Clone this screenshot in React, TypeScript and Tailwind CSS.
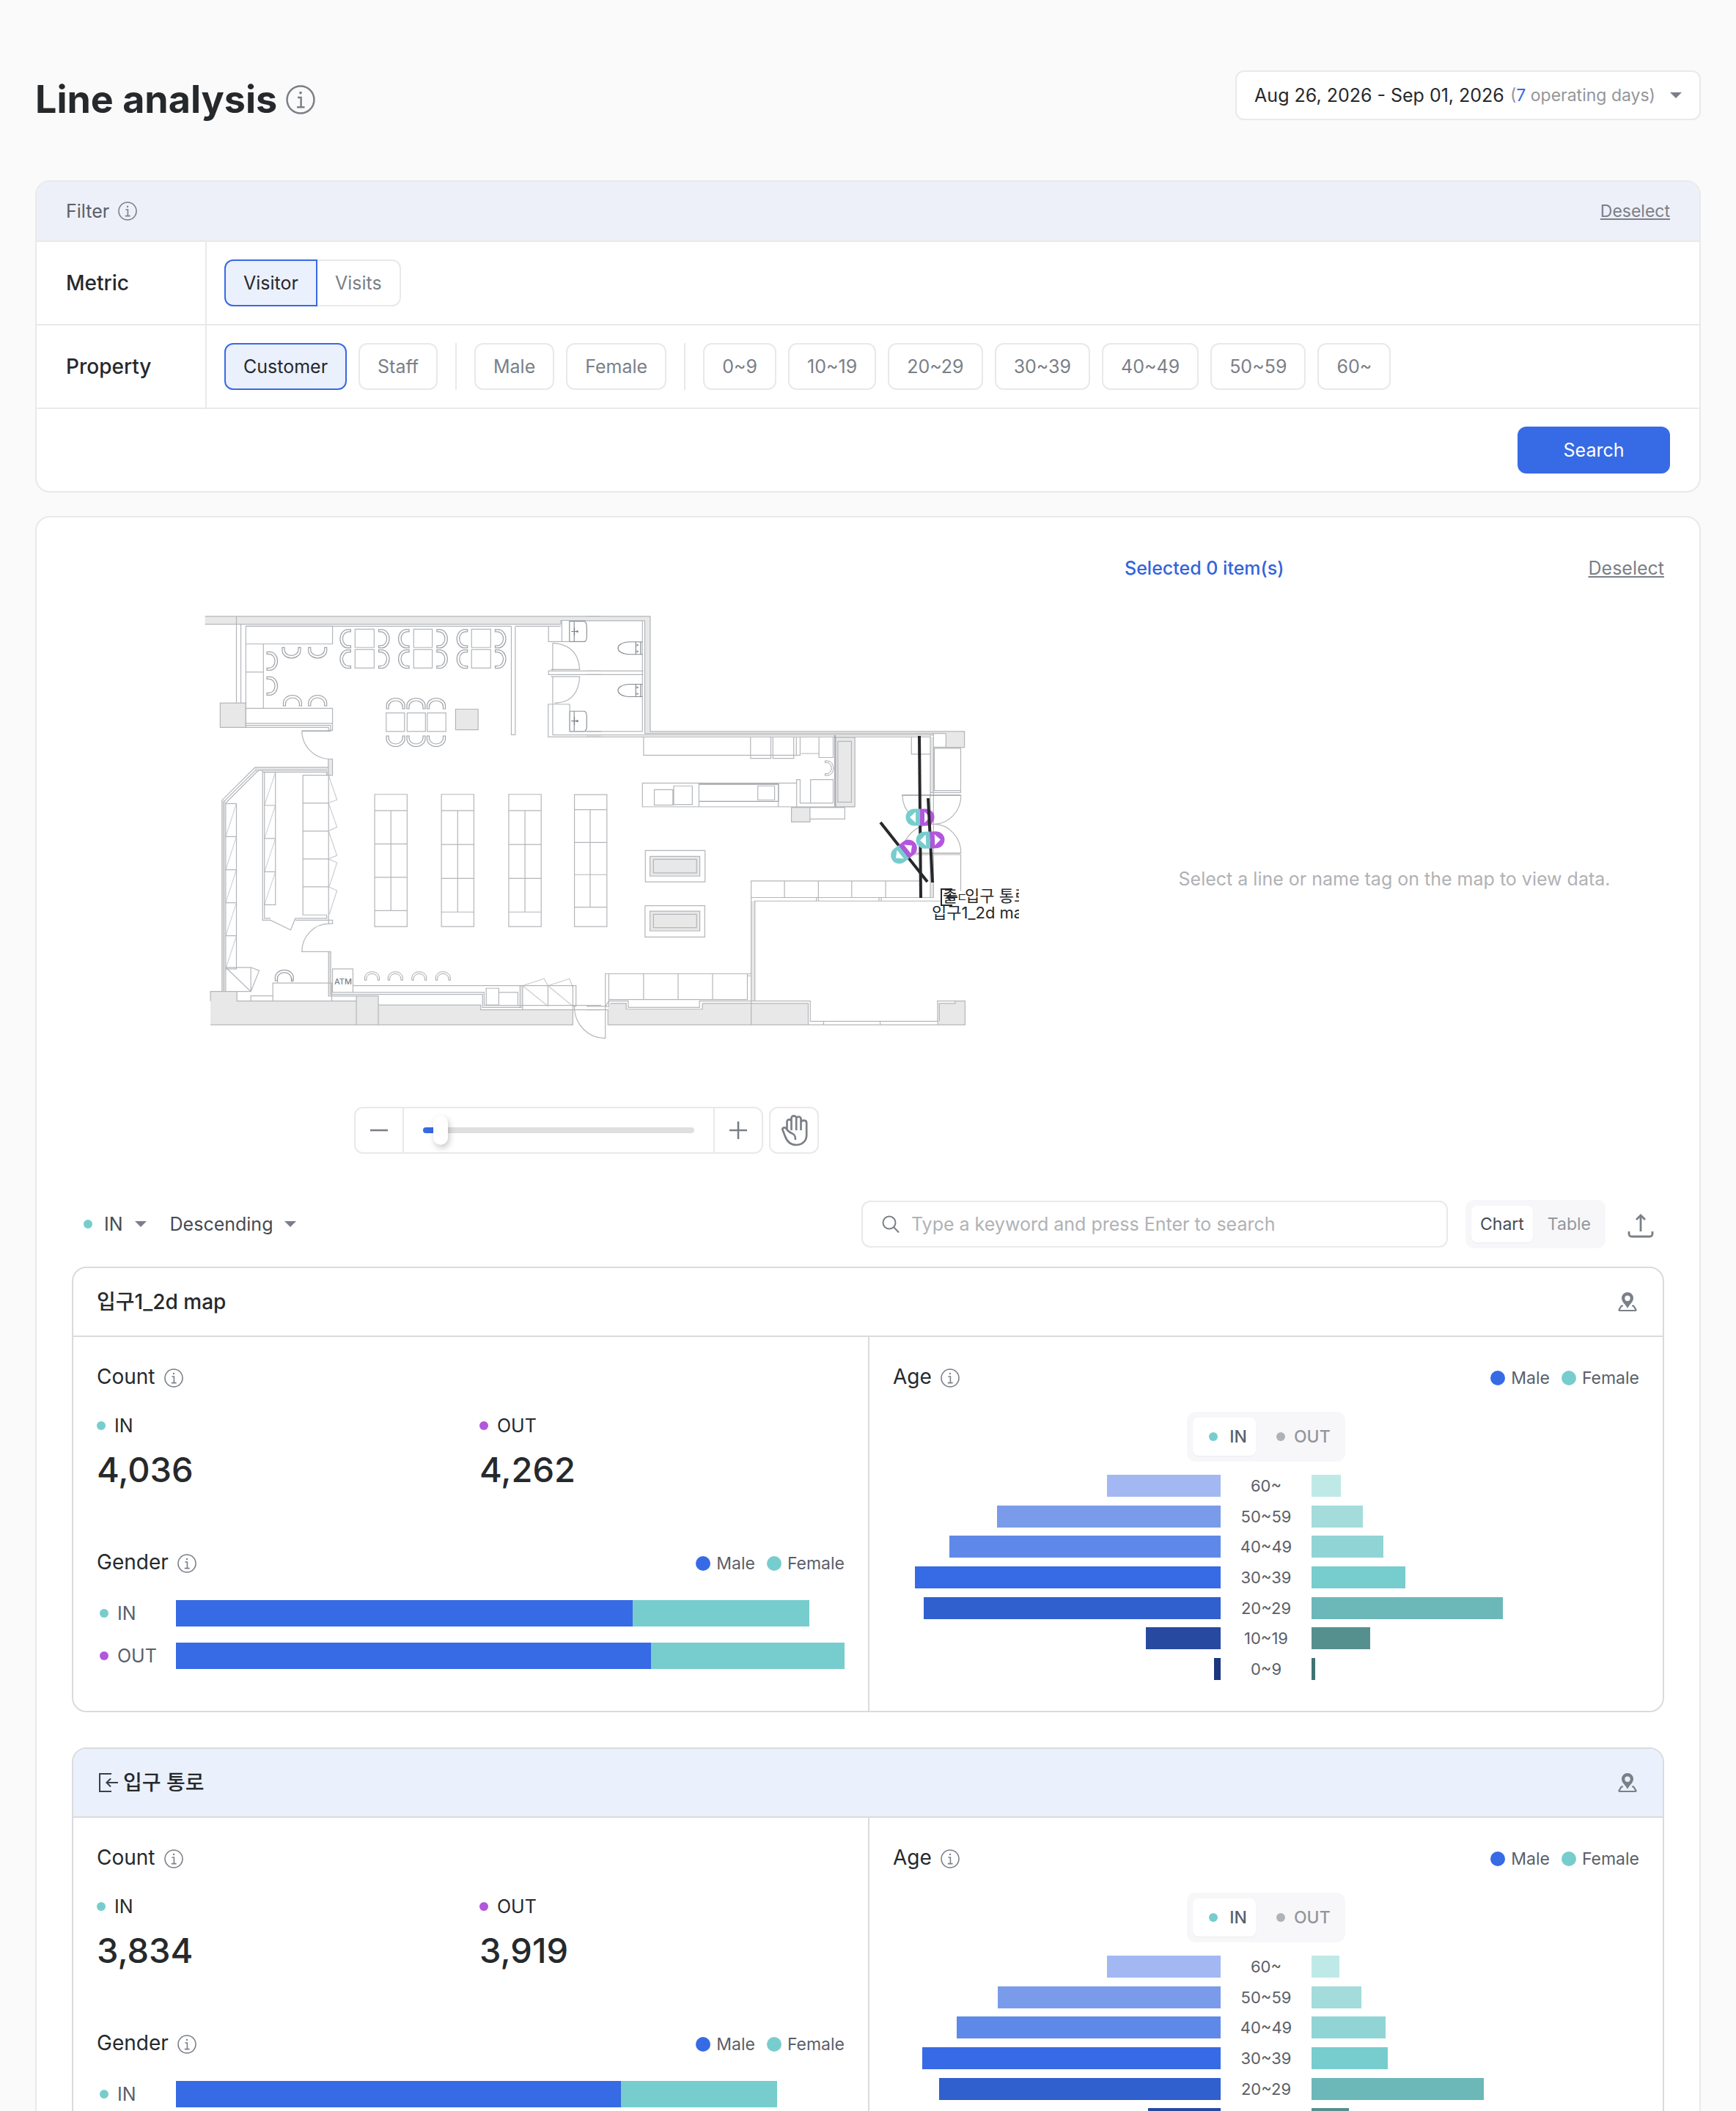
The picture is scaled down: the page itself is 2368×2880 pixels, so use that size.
import React, { useState } from "react";

type LineItem = {
  name: string;
  entrance?: boolean;
  count: { in: string; out: string };
  gender: { in: [number, number]; out: [number, number] };
  ages: { label: string; male: number; female: number }[];
};

/* Bar lengths are percentages of the space available to each chart. */
const ITEMS: LineItem[] = [
  {
    name: "입구1_2d map",
    count: { in: "4,036", out: "4,262" },
    gender: { in: [68.3, 26.4], out: [71.1, 28.9] },
    ages: [
      { label: "60~", male: 34.6, female: 9 },
      { label: "50~59", male: 68.2, female: 15.6 },
      { label: "40~49", male: 82.7, female: 22 },
      { label: "30~39", male: 93.3, female: 28.7 },
      { label: "20~29", male: 90.6, female: 58.3 },
      { label: "10~19", male: 22.9, female: 18 },
      { label: "0~9", male: 2.1, female: 1.1 },
    ],
  },
  {
    name: "입구 통로",
    entrance: true,
    count: { in: "3,834", out: "3,919" },
    gender: { in: [66.6, 23.3], out: [67.4, 24.6] },
    ages: [
      { label: "60~", male: 34.6, female: 8.5 },
      { label: "50~59", male: 68.1, female: 15.2 },
      { label: "40~49", male: 80.5, female: 22.5 },
      { label: "30~39", male: 91, female: 23.2 },
      { label: "20~29", male: 85.8, female: 52.6 },
      { label: "10~19", male: 22.1, female: 11.4 },
      { label: "0~9", male: 2, female: 1 },
    ],
  },
];

const MALE_SHADES = ["bg-[#a3b7f2]", "bg-[#7a9be9]", "bg-[#5f89e8]", "bg-[#376ae5]", "bg-[#305fce]", "bg-[#27499f]", "bg-[#1b367f]"];
const FEMALE_SHADES = ["bg-[#bfe9e7]", "bg-[#a3dcdb]", "bg-[#90d4d5]", "bg-[#77cdce]", "bg-[#6cb8b9]", "bg-[#55908f]", "bg-[#3f7473]"];

function InfoIcon({ className }: { className: string }) {
  return (
    <svg viewBox="0 0 26 26" className={className} fill="none" stroke="currentColor" strokeWidth="1.6" aria-hidden="true">
      <circle cx="13" cy="13" r="12" />
      <path d="M10.4 11H13.4V19.4M9.8 19.6H16.6" />
      <circle cx="13" cy="6.9" r="1.2" fill="currentColor" stroke="none" />
    </svg>
  );
}

function Caret() {
  return (
    <svg viewBox="0 0 16 8" className="pointer-events-none h-2 w-4 shrink-0 text-[#7b7f87]" fill="currentColor" aria-hidden="true">
      <path d="M0 0H16L8 8z" />
    </svg>
  );
}

function HandIcon() {
  return (
    <svg viewBox="104 56 116 138" className="h-[46px] w-[39px] text-[#7b7f87]" fill="none" stroke="currentColor" strokeWidth="8" strokeLinecap="butt" aria-hidden="true">
      <path d="M132 126V90a9 9 0 0 1 18 0V125M150 92V76a10 10 0 0 1 20 0V125M170 78a9.5 9.5 0 0 1 19 2V125M189 94c0-12 23-12 23 0V146c0 24-20 39-42 39-23 0-38-14-46-36l-10-26c-3-9 10-12 15-5 6 10 12 15 22 19 13 5 16 12 15 27" />
    </svg>
  );
}

function PinIcon() {
  return (
    <svg viewBox="0 0 28 28" className="h-7 w-7 text-[#7b8088]" fill="none" stroke="currentColor" strokeWidth="2.2" strokeLinejoin="round" aria-hidden="true">
      <path fillRule="evenodd" stroke="none" fill="currentColor" d="M14 1a8 8 0 0 0-8 8c0 5.500 5.500 8.500 8 14 2.500-5.500 8-8.500 8-14a8 8 0 0 0-8-8zm0 4.500a3.700 3.700 0 1 1 0 7.400 3.700 3.700 0 0 1 0-7.400z" />
      <path d="M8 19.500H5.800L2.600 24.600c-.5.900 0 1.400.9 1.400H24.500c.9 0 1.400-.5.900-1.400L22.200 19.500H20" />
    </svg>
  );
}

function EnterIcon() {
  return (
    <svg viewBox="0 0 32 32" className="h-8 w-8 text-[#3b4048]" fill="none" stroke="currentColor" strokeWidth="2" aria-hidden="true">
      <path d="M20 4H4V28H20M29 16H13M19 10.500L13.400 16L19 21.500" />
    </svg>
  );
}

function Chair({ x, y, r = 0, s = 1 }: { x: number; y: number; r?: number; s?: number }) {
  return (
    <path
      d="M-12.500 7V3A12.500 10.500 0 0 1 12.500 3V7H9.500V4A9.500 8 0 0 0 -9.500 4V7z"
      transform={`translate(${x} ${y}) rotate(${r}) scale(${s})`}
    />
  );
}

function chairAt(x: number, y: number, r = 0, s = 1) {
  return <Chair key={`${x}-${y}`} x={260 + x / 2.8} y={820 + y / 2.529} r={r} s={s} />;
}

/* The west wing is drawn on its own survey grid, 2.8 × 2.529 units per pixel. */
function WestWing() {
  const v = "non-scaling-stroke";
  return (
    <g transform="translate(260 820) scale(.35714 .39541)">
      <g fill="#e8e8e8">
        <path vectorEffect={v} d="M55 53H1568V68H1414V80H55z" stroke="none" />
        <path vectorEffect={v} d="M113 352H211V436H113zM1012 373H1098V444H1012z" />
        <path vectorEffect={v} d="M76 1380V1347H177V1380H633V1363H717V1394H1108V1410H1460V1462H76z" stroke="none" />
        <path vectorEffect={v} stroke="none" d="M526 545H542V601H520V588H246V574H526zM1258 1327H1268V1402H1258zM120 687H133V1347H120zM527 1210H535V1360H527z" />
      </g>
      <g>
        <path vectorEffect={v} d="M55 53H1568M55 80H1414V67H1568M175 53V352M192 80V352M211 436V87H542V148H211M278 148V370M211 245H278M211 370H542V446H527V436H211M211 422H542M211 429H535V446" />
        <path vectorEffect={v} d="M1225 87V461H1240V87M1225 87H211M1367 87V140H1418V68M1240 87H1414" />
        <path vectorEffect={v} d="M628 97H701V160H628zM628 167H701V231H628zM852 97H923V160H852zM852 167H923V231H852zM1073 97H1146V160H1073zM1073 167H1146V231H1073zM747 386H817V450H747zM827 386H897V450H827zM904 386H975V450H904z" />
        <path vectorEffect={v} stroke="#8f9399" d="M1447 70H1505Q1512 72 1513 90V122Q1513 137 1505 140H1447zM1465 72V140M1448 380H1503Q1513 382 1513 398V432Q1513 448 1503 450H1448zM1465 381V450" />
        <path vectorEffect={v} d="M1418 140H1447M1383 145Q1480 150 1486 236H1376M1383 145V241M1568 241H1367V254H1568M1376 236H1486M1376 261H1486Q1480 350 1390 352M1383 261V352" />
        <path vectorEffect={v} d="M1568 469H1366V356H1448V450H1568M1383 352V462H1568" />
        <path vectorEffect={v} d="M535 449H425A110 97 0 0 0 526 545M425 447H542M526 545H542V601H520V588M246 574H526V601M526 545V590" />
        <path vectorEffect={v} d="M246 574L120 687V1347M252 580L127 692V1347M260 583L134 697V1347M258 583H520M275 585V1101H305L382 1135L400 1095H520V1083M282 590V1095H305M275 590H520" />
        <path vectorEffect={v} d="M134 699H175V1269H134M134 813H175M134 927H175M134 1041H175M134 1155H175M282 591H324V1048H282M282 705H324M282 819H324M282 934H324" />
        <path vectorEffect={v} strokeOpacity=".6" d="M134 813L175 699M134 927L175 813M134 1041L175 927M134 1155L175 1041M134 1269L175 1155M282 705L324 591M282 819L324 705M282 934L324 819M282 1048L324 934" />
        <path vectorEffect={v} d="M527 601H429V1083H520M527 601V1113H542V1101H400M429 697H527M429 794H527M429 890H527M429 986H527" />
        <path vectorEffect={v} strokeOpacity=".7" d="M527 601L559 686L530 695M527 697L559 780L530 792M527 794L559 878L530 888M530 984L559 903L527 890M530 1080L559 999L527 986" />
        <path vectorEffect={v} d="M530 1113A105 97 0 0 0 425 1210H535V1357H1115V1402H1265M527 1210V1363H717V1462M633 1363V1462M717 1394H1108V1410H1568" />
        <path vectorEffect={v} d="M76 1380V1347H177V1380H633M76 1462H1460V1400M134 1264H230V1347H134M134 1264L230 1347L262 1275L230 1264M314 1380V1318H539V1380M314 1362H230V1380M332 1300V1316M387 1300V1316" />
        <path vectorEffect={v} d="M542 1269H620V1350H542zM620 1327H1472V1398H1460V1327M542 1350H1121V1395H1568M1129 1336H1177V1394H1129zM1177 1350H1250V1394M1258 1327V1402M1268 1327V1410M1365 1327V1398" />
        <path vectorEffect={v} strokeOpacity=".7" d="M1268 1327L1365 1398M1365 1327L1460 1398M1268 1327L1350 1303L1365 1327L1447 1303L1460 1333" />
        <path vectorEffect={v} d="M703 667H827V1123H703zM703 723H827M703 838H827M703 953H827M703 1068H827M765 723V1068" />
        <path vectorEffect={v} d="M958 667H1082V1123H958zM958 723H1082M958 840H1082M958 957H1082M958 1073H1082M1020 723V1073" />
        <path vectorEffect={v} d="M1215 667H1339V1123H1215zM1215 723H1339M1215 840H1339M1215 957H1339M1215 1073H1339M1277 723V1073" />
        <path vectorEffect={v} d="M1466 668H1590V1123H1466zM1466 720H1590M1466 833H1590M1466 944H1590M1466 1056H1590M1526 720V1056" />
      </g>
      <g stroke="#7d8288" fill="#7d8288">
        <path vectorEffect={v} fill="none" d="M1454 105H1480M1454 414H1480M1466 92V118M1466 400V428" />
        <circle cx="1477" cy="105" r="4" stroke="none" />
        <circle cx="1477" cy="414" r="4" stroke="none" />
      </g>
    </g>
  );
}

function EastWing() {
  const v = "non-scaling-stroke";
  return (
    <g transform="translate(800 820) scale(.39541)">
      <g fill="#e8e8e8" stroke="none">
        <path d="M0 53H220V450H1240V457H201V68H0z" />
        <path d="M860 470H926V710H860zM707 712H771V762H707zM1240 450H1304V505H1240z" />
        <path d="M219 881H391V949H219zM219 1070H391V1138H219z" />
        <path d="M74 1462V1398L82 1388H137V1408H400V1388H766V1462zM1214 1462V1388H1272V1380H1306V1462z" />
        <path d="M568 1035H581V1380H568zM1186 470H1198V661H1186zM1186 875H1198V1023H1186z" />
      </g>
      <path vectorEffect={v} d="M0 53H220V450H1304V505H1240M0 68H201V457H1240M193 70V450M0 450H193M0 462H1197M0 469H1186M0 241H196M0 254H196" />
      <path vectorEffect={v} stroke="#85898f" d="M193 141H150C95 142 95 183 150 184H193M170 141V184M187 141V184M193 287H150C95 288 95 329 150 330H193M170 287V330M187 287V330" />
      <path d="M173 148l8 4-8 4zM173 170l8 4-8 4zM173 294l8 4-8 4zM173 316l8 4-8 4z" fill="#85898f" stroke="none" />
      <path vectorEffect={v} d="M197 470V532H737V470M566 470V543H636V470M643 470V543H715V470M724 470V532M740 526H802M802 470V540H851V470M860 470H926V710H860zM867 484H914V694H867z" />
      <path vectorEffect={v} stroke="#85898f" d="M857 463V710M388 691H662V630M388 632H662" />
      <path vectorEffect={v} d="M725 628H193V710H926M234 651H298V704H234zM301 638H365V702H301zM388 628V710M662 628V710M591 638H649V686H591zM725 710V616H737V697H851M773 697V616H851V697M707 712H771V762H707zM771 712H891V752H771z" />
      <path vectorEffect={v} d="M203 861H409V969H203zM219 881H391V949H219zM231 891H380V938H231zM202 1051H408V1159H202zM219 1070H391V1138H219zM231 1081H380V1127H231z" />
      <path vectorEffect={v} d="M1150 966H568V1023H1198M683 966V1023M800 966V1023M915 966V1023M1032 966V1023M568 1023V1462M581 1380V1035H1225M793 1023V1035M800 1023V1035M1009 1023V1035M1017 1023V1035" />
      <path vectorEffect={v} d="M1121 470V528H1186M1186 464V1023M1197 457V1023M1240 457V504H1198M1200 508H1291V654H1200zM1186 661H1291V654M1200 875H1291V1000M1130 875H1291" />
      <path vectorEffect={v} stroke="#85898f" d="M1088 670H1292M1120 870H1292" />
      <path vectorEffect={v} d="M1090 670A106 100 0 0 0 1198 770A94 100 0 0 0 1292 670M1292 870A94 100 0 0 0 1198 770A106 100 0 0 0 1090 870" />
      <path vectorEffect={v} d="M65 1510V1286H568M77 1398V1286M197 1286V1375M316 1286V1375M435 1286V1375M555 1286V1375H77M555 1293H568M0 1398H77M0 1410H74V1462H1306V1380H1211V1450H772V1380H390V1402H144V1380H77L66 1398M82 1388H137V1408H400V1388H765V1462M818 1450V1462M1013 1450V1462M1212 1462V1450M1217 1450V1388H1272V1380" />
      <path vectorEffect={v} d="M-42 1400A105 108 0 0 0 66 1508" />
    </g>
  );
}

function Marker({ x, y, r }: { x: number; y: number; r: number }) {
  return (
    <g transform={`translate(${x} ${y}) rotate(${r})`} stroke="none">
      <path d="M0 -11.500H-8A11.500 11.500 0 0 0 -8 11.500H0z" fill="#77cdce" />
      <path d="M0 -11.500H8A11.500 11.500 0 0 1 8 11.500H0z" fill="#b257dc" />
      <path d="M-14 0L-6 -7.500V7.500zM14 0L6 -7.500V7.500z" fill="#fff" />
    </g>
  );
}

function FloorPlan() {
  return (
    <svg viewBox="210 754 1180 756" className="block h-auto w-full max-w-[1180px] overflow-hidden" role="img" aria-label="Store floor plan">
      <g fill="none" stroke="#b3b6ba" strokeWidth="1.2">
        <WestWing />
        <EastWing />
        <g stroke="#9fa3a8">
          {[385, 485].map((x) => chairAt(x, 178, 180))}
          {[389, 485].map((x) => chairAt(x, 344))}
          {[207, 293].map((y) => chairAt(311, y, 90))}
          {[592, 815, 1038].flatMap((x) => [130, 200].map((y) => chairAt(x, y, -90)))}
          {[738, 960, 1183].flatMap((x) => [130, 200].map((y) => chairAt(x, y, 90)))}
          {[783, 861, 938].map((x) => chairAt(x, 354))}
          {[783, 861, 938].map((x) => chairAt(x, 483, 180))}
          {[693, 782, 873, 964].map((x) => chairAt(x, 1294, 0, 0.8))}
          {chairAt(358, 1292)}
          <Chair x={1131} y={1048} r={90} s={0.8} />
        </g>
      </g>
      <text x="456" y="1343" fontSize="11" fontWeight="500" fill="#7d8186" className="font-['Inter',sans-serif]">
        ATM
      </text>
      <g stroke="#26282b" strokeWidth="4" fill="none">
        <path d="M1254 1004L1256 1225" />
        <Marker x={1255} y={1115} r={0} />
        <path d="M1266 1089L1272 1204" />
        <path d="M1201 1122L1265 1203" />
        <Marker x={1269} y={1146} r={-2} />
        <Marker x={1233} y={1162} r={-38} />
      </g>
      <path d="M1299 1213H1284V1235H1299M1292 1224H1306M1297 1219L1292 1224L1297 1229" fill="none" stroke="#26282b" strokeWidth="2" />
      <g fontSize="22" fill="#26282b" className="font-['Inter','Noto_Sans_CJK_KR',sans-serif]">
        <text x="1286" y="1230">출</text>
        <text x="1305" y="1230" fontSize="16">ㄷ</text>
        <text x="1316" y="1230">입구 통로</text>
        <text x="1271" y="1253">입구1_2d ma</text>
      </g>
    </svg>
  );
}

function Chip({ label, on = false }: { label: string; on?: boolean }) {
  return (
    <button
      type="button"
      aria-pressed={on}
      className={
        on
          ? "h-16 rounded-xl border-2 border-[#376ae5] bg-[#ebf0fd] px-6 text-[25px] leading-8 text-[#26292c]"
          : "h-16 rounded-xl border-2 border-[#e8e9eb] bg-white px-6 text-[25px] leading-8 text-[#7b7f87]"
      }
    >
      {label}
    </button>
  );
}

function Dot({ tone }: { tone: "in" | "out" | "off" }) {
  const color = tone === "in" ? "bg-[#77cdce]" : tone === "out" ? "bg-[#b257dc]" : "bg-[#b0b2b5]";
  return <span className={`h-3 w-3 shrink-0 rounded-full ${color}`} />;
}

function Legend() {
  return (
    <div className="flex items-center gap-4 pt-1 text-[23px] leading-8 text-[#5a5f69]">
      <span className="flex items-center gap-2">
        <span className="h-5 w-5 rounded-full bg-[#376ae5]" />
        Male
      </span>
      <span className="flex items-center gap-2">
        <span className="h-5 w-5 rounded-full bg-[#77cdce]" />
        Female
      </span>
    </div>
  );
}

function SectionTitle({ children }: { children: React.ReactNode }) {
  return (
    <h3 className="flex items-center gap-3 text-[28px] leading-10 text-[#26292c]">
      {children}
      <InfoIcon className="mt-1 h-[26px] w-[26px] text-[#7b7f87]" />
    </h3>
  );
}

function CountCell({ tone, label, value }: { tone: "in" | "out"; label: string; value: string }) {
  return (
    <div>
      <div className="flex items-center gap-3 text-[25px] leading-9 text-[#26292c]">
        <Dot tone={tone} />
        {label}
      </div>
      <div className="mt-3 text-[47px] leading-[60px] font-medium text-[#26292c]">{value}</div>
    </div>
  );
}

function GenderRow({ tone, label, parts }: { tone: "in" | "out"; label: string; parts: [number, number] }) {
  return (
    <div className="flex h-9 items-center">
      <div className="flex w-[108px] shrink-0 items-center gap-3 pl-1 text-[25px] leading-9 text-[#5a5f69]">
        <Dot tone={tone} />
        {label}
      </div>
      <div className="flex h-9 flex-1">
        <div className="bg-[#376ae5]" style={{ width: `${parts[0]}%` }} />
        <div className="bg-[#77cdce]" style={{ width: `${parts[1]}%` }} />
      </div>
    </div>
  );
}

function LineCard({ item }: { item: LineItem }) {
  return (
    <article className="overflow-hidden rounded-[20px] border-2 border-[#dadbdd] bg-white">
      <header
        className={
          item.entrance
            ? "flex h-[94px] items-center justify-between border-b-2 border-[#dadbdd] bg-[#ebf0fd] px-8"
            : "flex h-[94px] items-center justify-between border-b-2 border-[#dadbdd] px-8"
        }
      >
        <h2 className="flex items-center gap-1 text-[28px] leading-10 font-medium text-[#26292c]">
          {item.entrance && <EnterIcon />}
          {item.name}
        </h2>
        <button type="button" aria-label="Show on map" className="flex h-8 w-8 items-center justify-center">
          <PinIcon />
        </button>
      </header>
      <div className="grid grid-cols-2">
        <section className="px-8 pt-[34px] pb-14">
          <SectionTitle>Count</SectionTitle>
          <div className="mt-[29px] grid grid-cols-2 gap-6">
            <CountCell tone="in" label="IN" value={item.count.in} />
            <CountCell tone="out" label="OUT" value={item.count.out} />
          </div>
          <div className="mt-[76px] flex items-center justify-between">
            <SectionTitle>Gender</SectionTitle>
            <Legend />
          </div>
          <div className="mt-8 flex flex-col gap-[22px]">
            <GenderRow tone="in" label="IN" parts={item.gender.in} />
            <GenderRow tone="out" label="OUT" parts={item.gender.out} />
          </div>
        </section>
        <section className="border-l-2 border-[#dadbdd] px-8 pt-[34px] pb-[42px]">
          <div className="flex items-center justify-between">
            <SectionTitle>Age</SectionTitle>
            <Legend />
          </div>
          <div className="mt-7 flex justify-center">
            <div className="flex h-[68px] items-center rounded-xl bg-[#f7f7fa] p-2 text-[23px] leading-8 font-medium">
              <button type="button" aria-pressed="true" className="flex h-[52px] items-center gap-4 rounded-lg bg-white pr-3 pl-[22px] text-[#5a5f69] shadow-xs">
                <Dot tone="in" />
                IN
              </button>
              <button type="button" aria-pressed="false" className="flex h-[52px] items-center gap-3 pr-3 pl-7 text-[#94969a]">
                <Dot tone="off" />
                OUT
              </button>
            </div>
          </div>
          <div className="mt-[18px] flex h-[280px] flex-col justify-between">
            {item.ages.map((row, i) => (
              <div key={row.label} className="grid h-[30px] grid-cols-[1fr_124px_1fr] items-center">
                <div className="flex h-[30px] justify-end">
                  <div className={MALE_SHADES[i]} style={{ width: `${row.male}%` }} />
                </div>
                <div className="text-center text-[22px] leading-[30px] text-[#5a5f69]">{row.label}</div>
                <div className="flex h-[30px]">
                  <div className={FEMALE_SHADES[i]} style={{ width: `${row.female}%` }} />
                </div>
              </div>
            ))}
          </div>
        </section>
      </div>
    </article>
  );
}

export default function App() {
  const [zoom, setZoom] = useState(4);
  return (
    <div className="h-screen overflow-y-auto bg-[#fafafa] px-12 pt-24 font-['Inter','Noto_Sans_CJK_KR',sans-serif] text-[#26292c] [scrollbar-width:none]">
      <header className="flex h-[150px] items-start justify-between">
        <h1 className="flex items-center gap-3 text-[52px] leading-[80px] font-bold">
          Line analysis
          <InfoIcon className="h-10 w-10 text-[#7b7f87]" />
        </h1>
        <button type="button" className="flex h-[68px] items-center rounded-xl border-2 border-[#e8e9eb] bg-white pr-6 pl-6 text-[25px] leading-8">
          Aug 26, 2026 - Sep 01, 2026
          <span className="mr-5 ml-2 text-[23px] text-[#94969a]">
            (<span className="text-[#376ae5]">7</span> operating days)
          </span>
          <Caret />
        </button>
      </header>

      <section className="overflow-hidden rounded-[20px] border-2 border-[#e8e9eb] bg-white">
        <div className="flex h-[82px] items-center justify-between border-b-2 border-[#e8e9eb] bg-[#edf0f8] px-10">
          <span className="flex items-center gap-3 text-[25px] leading-8 text-[#5a5f69]">
            Filter
            <InfoIcon className="h-[26px] w-[26px] text-[#7b7f87]" />
          </span>
          <button type="button" className="text-[23px] leading-8 text-[#7b7f87] underline underline-offset-2">
            Deselect
          </button>
        </div>
        <div className="flex h-[114px] border-b-2 border-[#e8e9eb]">
          <div className="flex w-[232px] items-center border-r-2 border-[#e8e9eb] pl-10 text-[28px] font-medium">Metric</div>
          <div className="flex items-center pl-6">
            <button type="button" aria-pressed="true" className="h-16 rounded-l-xl border-2 border-[#376ae5] bg-[#ebf0fd] px-6 text-[25px] leading-8">
              Visitor
            </button>
            <button type="button" aria-pressed="false" className="h-16 rounded-r-xl border-2 border-l-0 border-[#e8e9eb] px-6 text-[25px] leading-8 text-[#7b7f87]">
              Visits
            </button>
          </div>
        </div>
        <div className="flex h-[114px] border-b-2 border-[#e8e9eb]">
          <div className="flex w-[232px] items-center border-r-2 border-[#e8e9eb] pl-10 text-[28px] font-medium">Property</div>
          <div className="flex items-center gap-6 pl-6">
            <div className="flex gap-4">
              <Chip label="Customer" on />
              <Chip label="Staff" />
            </div>
            <span className="h-16 w-[2px] bg-[#e8e9eb]" />
            <div className="flex gap-4">
              <Chip label="Male" />
              <Chip label="Female" />
            </div>
            <span className="h-16 w-[2px] bg-[#e8e9eb]" />
            <div className="flex gap-4">
              {["0~9", "10~19", "20~29", "30~39", "40~49", "50~59", "60~"].map((age) => (
                <Chip key={age} label={age} />
              ))}
            </div>
          </div>
        </div>
        <div className="flex h-[112px] items-center justify-end px-10">
          <button type="button" className="h-16 w-52 rounded-xl bg-[#376ae5] text-[25px] leading-8 text-white">
            Search
          </button>
        </div>
      </section>

      <main className="mt-8 rounded-[20px] border-2 border-[#e8e9eb] bg-white px-12 pt-12 pb-12">
        <div className="grid grid-cols-[1404fr_736fr] gap-8">
          <div className="flex flex-col items-center pb-7">
            <FloorPlan />
            <div className="flex gap-2">
              <div className="flex h-16 rounded-xl border-2 border-[#e8e9eb] text-[#7b7f87]">
                <button type="button" aria-label="Zoom out" onClick={() => setZoom(Math.max(0, zoom - 1))} className="flex w-[66px] items-center justify-center border-r-2 border-[#e8e9eb]">
                  <svg viewBox="0 0 24 24" className="h-6 w-6" fill="none" stroke="currentColor" strokeWidth="2.6" aria-hidden="true">
                    <path d="M0 12H24" />
                  </svg>
                </button>
                <label className="flex items-center px-[26px]">
                  <input
                    type="range"
                    aria-label="Map zoom"
                    min={0}
                    max={100}
                    value={zoom}
                    onChange={(e) => setZoom(Number(e.target.value))}
                    style={{ "--fill": `${zoom * 0.95 + 2}%` } as React.CSSProperties}
                    className="h-10 w-[370px] appearance-none bg-transparent [&::-webkit-slider-runnable-track]:h-2 [&::-webkit-slider-runnable-track]:rounded-full [&::-webkit-slider-runnable-track]:bg-[linear-gradient(to_right,#376ae5_var(--fill),#dfdfe0_var(--fill))] [&::-webkit-slider-thumb]:-mt-4 [&::-webkit-slider-thumb]:h-10 [&::-webkit-slider-thumb]:w-5 [&::-webkit-slider-thumb]:appearance-none [&::-webkit-slider-thumb]:rounded-full [&::-webkit-slider-thumb]:bg-white [&::-webkit-slider-thumb]:shadow-[2px_4px_8px_rgba(0,0,0,0.22)]"
                  />
                </label>
                <button type="button" aria-label="Zoom in" onClick={() => setZoom(Math.min(100, zoom + 1))} className="flex w-[66px] items-center justify-center border-l-2 border-[#e8e9eb]">
                  <svg viewBox="0 0 24 24" className="h-6 w-6" fill="none" stroke="currentColor" strokeWidth="2.6" aria-hidden="true">
                    <path d="M0 12H24M12 0V24" />
                  </svg>
                </button>
              </div>
              <button type="button" aria-label="Pan map" className="flex h-16 w-[68px] items-center justify-center rounded-xl border-2 border-[#e8e9eb]">
                <HandIcon />
              </button>
            </div>
          </div>
          <div className="flex flex-col">
            <div className="flex h-[42px] items-center justify-between text-[25px] leading-8">
              <span className="font-medium text-[#3264dc]">Selected 0 item(s)</span>
              <button type="button" className="text-[#7b7f87] underline underline-offset-2">
                Deselect
              </button>
            </div>
            <p className="flex flex-1 items-center justify-center text-[25px] leading-8 text-[#b0b2b5]">Select a line or name tag on the map to view data.</p>
          </div>
        </div>

        <div className="mt-9 flex h-16 items-center">
          <div className="flex items-center pl-4 text-[25px] leading-8 text-[#474b53]">
            <Dot tone="in" />
            <label className="ml-4 flex items-center gap-4">
              <select aria-label="Sort by" className="field-sizing-content appearance-none bg-transparent">
                <option>IN</option>
                <option>OUT</option>
              </select>
              <Caret />
            </label>
            <label className="ml-8 flex items-center gap-4">
              <select aria-label="Sort order" className="field-sizing-content appearance-none bg-transparent">
                <option>Descending</option>
                <option>Ascending</option>
              </select>
              <Caret />
            </label>
          </div>
          <label className="ml-auto flex h-16 w-[800px] items-center gap-4 rounded-xl border-2 border-[#e8e9eb] px-[26px]">
            <svg viewBox="0 0 24 24" className="h-6 w-6 shrink-0 text-[#7b7f87]" fill="none" stroke="currentColor" strokeWidth="2" aria-hidden="true">
              <circle cx="10" cy="10" r="8.500" />
              <path d="M16 16L23 23.500" />
            </svg>
            <input type="search" aria-label="Search lines" placeholder="Type a keyword and press Enter to search" className="min-w-0 flex-1 bg-transparent text-[25px] leading-8 outline-none placeholder:text-[#b0b2b5]" />
          </label>
          <div className="ml-6 flex h-[66px] items-center rounded-xl bg-[#f7f7fa] p-2 text-[23px] leading-8">
            <button type="button" aria-pressed="true" className="h-[50px] rounded-lg bg-white px-3 text-[#474b53] shadow-xs">
              Chart
            </button>
            <button type="button" aria-pressed="false" className="h-[50px] pr-3 pl-5 text-[#94969a]">
              Table
            </button>
          </div>
          <button type="button" aria-label="Export" className="ml-4 flex h-16 w-16 items-center justify-center pt-1 text-[#7b7f87]">
            <svg viewBox="0 0 36 36" className="h-9 w-9" fill="none" stroke="currentColor" strokeWidth="2.800" aria-hidden="true">
              <path d="M2 26V29Q2 33 6 33H30Q34 33 34 29V26M18 26V4M12 10L18 4L24 10" />
            </svg>
          </button>
        </div>

        <div className="mt-[26px] flex flex-col gap-12">
          {ITEMS.map((item) => (
            <LineCard key={item.name} item={item} />
          ))}
        </div>
      </main>
    </div>
  );
}
